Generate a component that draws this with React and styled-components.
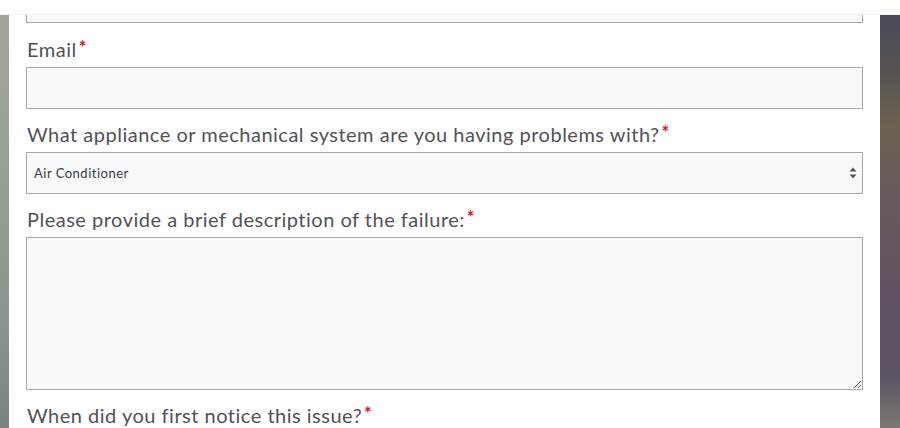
import React from 'react';
import styled, {createGlobalStyle} from 'styled-components';

const text_color = '#515157'
const field_bg = '#f8f9fb'
const field_border = '#a8a8ab'

const GlobalStyle = createGlobalStyle`
    html, body {
        margin: 0;
        padding: 0;
        height: 100%;
        overflow: hidden;
        background: #ffffff;
    }
    #root {
        height: 100%;
    }
`

const fields = [
    {label: 'Email', kind: 'input'},
    {label: 'What appliance or mechanical system are you having problems with?', kind: 'select'},
    {label: 'Please provide a brief description of the failure:', kind: 'textarea'},
    {label: 'When did you first notice this issue?', kind: 'input'},
]

const App = () => {
    return (
        <>
            <GlobalStyle/>
            <TopBar/>
            <Backdrop>
                <LeftStrip/>
                <Panel>
                    <Form>
                        <Input type="text" aria-label="Phone"/>
                        {fields.map((f) => (
                            <Group key={f.label}>
                                <Label>{f.label}<Req>*</Req></Label>
                                {f.kind === 'input' && <Input type="text"/>}
                                {f.kind === 'select' && (
                                    <SelectWrap>
                                        <Select defaultValue="ac">
                                            <option value="ac">Air Conditioner</option>
                                            <option value="heat">Furnace</option>
                                            <option value="wh">Water Heater</option>
                                        </Select>
                                        <Arrows viewBox="0 0 8 12" aria-hidden="true">
                                            <path d="M4 0.5 L7.5 4.5 H0.5 Z" fill="#55565c"/>
                                            <path d="M4 11.5 L7.5 7.5 H0.5 Z" fill="#55565c"/>
                                        </Arrows>
                                    </SelectWrap>
                                )}
                                {f.kind === 'textarea' && <TextArea/>}
                            </Group>
                        ))}
                    </Form>
                </Panel>
                <RightStrip/>
            </Backdrop>
        </>
    )
}

const TopBar = styled.div`
    position: fixed;
    top: 0;
    left: 0;
    right: 0;
    height: 14px;
    background: #ffffff;
    border-bottom: 1px solid #f0f0f2;
    z-index: 5;
`
const Backdrop = styled.div`
    display: grid;
    grid-template-columns: 9px 1fr 20px;
    height: 100%;
`
const LeftStrip = styled.div`
    background: linear-gradient(180deg, #a2a69f 0%, #9a9e98 40%, #8f938f 75%, #7d817f 100%);
`
const RightStrip = styled.div`
    background: linear-gradient(180deg, #4b4a5c 4%, #5a5552 18%, #6b6350 30%, #655b5c 45%, #5e5261 70%, #5d5462 88%, #7c7772 100%);
`
const Panel = styled.div`
    background: #ffffff;
    padding: 0 17px;
    overflow: hidden;
`
const Form = styled.form`
    display: flex;
    flex-direction: column;
    margin-top: -19px;
`
const Group = styled.div`
    display: flex;
    flex-direction: column;
    &:first-of-type > label {
        margin-top: 14px;
    }
`
const Label = styled.label`
    display: block;
    font-family: 'Lato', sans-serif;
    font-size: 20px;
    letter-spacing: 0.5px;
    color: ${text_color};
    line-height: 24px;
    height: 24px;
    margin: 13px 0 6px 1px;
    white-space: nowrap;
`
const Req = styled.span`
    color: #e0102a;
    font-size: 18px;
    font-weight: 700;
    line-height: 0;
    position: relative;
    top: -3px;
    margin-left: 2px;
`
const Input = styled.input`
    box-sizing: border-box;
    width: 100%;
    height: 42px;
    background: ${field_bg};
    border: 1px solid ${field_border};
    border-radius: 0;
    margin: 0;
    outline: none;
`
const SelectWrap = styled.div`
    position: relative;
`
const Select = styled.select`
    box-sizing: border-box;
    width: 100%;
    height: 42px;
    appearance: none;
    background: ${field_bg};
    border: 1px solid ${field_border};
    border-radius: 0;
    padding: 0 7px;
    font-family: 'Lato', sans-serif;
    font-size: 13px;
    letter-spacing: 0.5px;
    color: #3c3c42;
    outline: none;
`
const Arrows = styled.svg`
    position: absolute;
    right: 6px;
    top: 15px;
    width: 8px;
    height: 12px;
    pointer-events: none;
`
const TextArea = styled.textarea`
    box-sizing: border-box;
    width: 100%;
    height: 153px;
    background: ${field_bg};
    border: 1px solid ${field_border};
    border-radius: 0;
    margin: 0;
    resize: vertical;
    display: block;
    outline: none;
`

export default App;
